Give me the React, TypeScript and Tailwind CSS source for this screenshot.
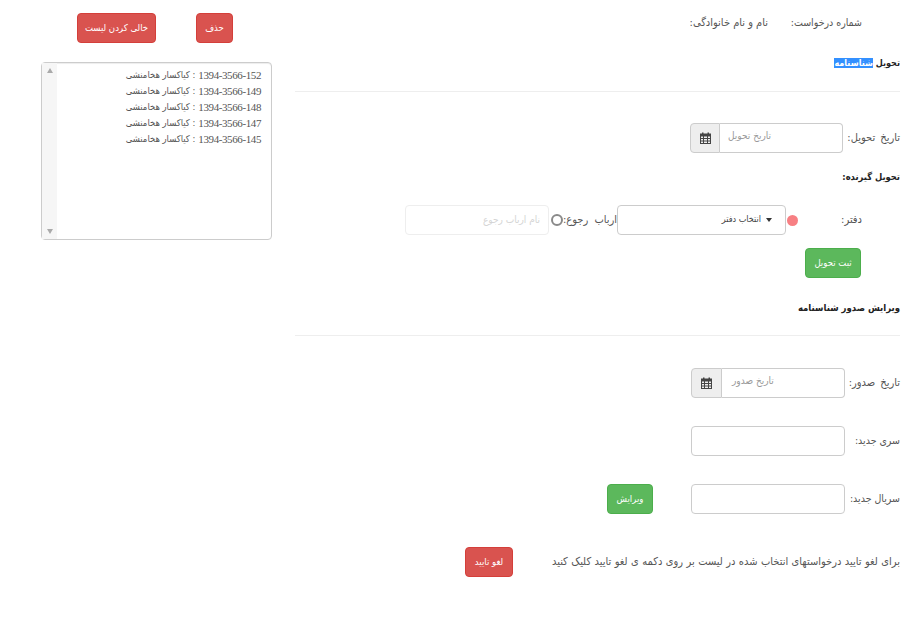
function Addon({ width }: { width: string }) {
  return (
    <span className={`flex h-full items-center justify-center rounded-l-[4px] border border-[#cccccc] bg-[#eeeeee] text-[#444] ${width}`}>
      <svg width="11" height="12" viewBox="0 0 11 12" fill="currentColor" aria-hidden="true">
        <path d="M0 1.5h2V.5h1.5v1h4v-1H9v1h2V12H0V1.5z" />
        <path fill="#eeeeee" d="M1 4.5h2v1.5H1zM4 4.5h3v1.5H4zM8 4.5h2v1.5H8zM1 7h2v1.5H1zM4 7h3v1.5H4zM8 7h2v1.5H8zM1 9.5h2V11H1zM4 9.5h3V11H4zM8 9.5h2V11H8z" />
      </svg>
    </span>
  );
}

function DateGroup({ placeholder, input, addon, pad }: { placeholder: string; input: string; addon: string; pad: string }) {
  return (
    <div className="flex h-[30px] items-stretch" dir="ltr">
      <Addon width={addon} />
      <div className={`flex items-center rounded-r-[4px] border border-l-0 border-[#cccccc] bg-white pb-[5px] text-[10px] text-[#999] ${pad} ${input}`}>
        <span dir="rtl">{placeholder}</span>
      </div>
    </div>
  );
}

function Btn({ color, className, children }: { color: "red" | "green"; className: string; children: string }) {
  const c = color === "red" ? "bg-[#d9534f] border-[#d43f3a]" : "bg-[#5cb85c] border-[#4cae4c]";
  return (
    <button className={`flex h-[30px] items-center justify-center whitespace-nowrap rounded-[4px] border text-[9.5px] text-white ${c} ${className}`}>
      {children}
    </button>
  );
}

const items = ["1394-3566-152", "1394-3566-149", "1394-3566-148", "1394-3566-147", "1394-3566-145"];

export default function App() {
  return (
    <div className="flex h-[641px] w-[921px] overflow-hidden whitespace-nowrap bg-white font-['DejaVu_Sans_Condensed','DejaVu_Sans',sans-serif] text-[11px] text-[#333]">
      <aside className="w-[295px] shrink-0 pl-[41px] pt-[13px]">
        <div className="ml-[36px] flex gap-[40px]">
          <Btn color="red" className="w-[79px]">خالی کردن لیست</Btn>
          <Btn color="red" className="w-[37px]">حذف</Btn>
        </div>
        <div className="mt-[19px] flex h-[178px] w-[231px] rounded-[4px] border border-[#cccccc] bg-white shadow-[inset_0_1px_1px_rgba(0,0,0,0.075)]">
          <div className="flex w-[15px] flex-col items-center justify-between bg-[#f6f6f6] py-[5px]">
            <span className="h-0 w-0 border-x-[3.5px] border-b-[5px] border-x-transparent border-b-[#aaa]" />
            <span className="h-0 w-0 border-x-[3.5px] border-t-[5px] border-x-transparent border-t-[#aaa]" />
          </div>
          <ul className="flex-1 pr-[10px] pt-[4px] leading-[16px]" dir="rtl">
            {items.map((n) => (
              <li key={n} className="flex gap-[3px] text-[#555]">
                <span dir="ltr" className="font-['Liberation_Serif',serif] text-[11px] tracking-[-0.4px]">{n}</span>
                <span className="text-[9.4px]">: کیاکسار هخامنشی</span>
              </li>
            ))}
          </ul>
        </div>
      </aside>

      <main className="w-[605px] pt-[15px]" dir="rtl">
        <div className="flex h-[16px] items-center pr-[38px] text-[#555]">
          <span className="w-[94px] text-[10.5px]">شماره درخواست:</span>
          <span className="text-[11px]">نام و نام خانوادگی:</span>
        </div>

        <h2 className="mt-[25px] text-[9px] font-bold leading-[14px] text-[#222]">
          تحویل <span className="bg-[#3390ff] text-white">شناسنامه</span>
        </h2>
        <hr className="mt-[21px] border-[#eeeeee]" />

        <div className="mt-[31px] flex items-center gap-[4px]">
          <span className="w-[53px] text-[#555] [word-spacing:2px]">تاریخ تحویل:</span>
          <DateGroup placeholder="تاریخ تحویل" input="w-[123px]" addon="w-[30px]" pad="pl-[8px]" />
        </div>

        <h3 className="mt-[17px] text-[9.3px] font-bold leading-[14px] text-[#222]">تحویل گیرنده:</h3>

        <div className="mt-[21px] flex h-[30px] items-center">
          <span className="w-[102px] pr-[38px] text-[#555]">دفتر:</span>
          <span className="ml-[1px] h-[11px] w-[11px] rounded-full bg-[#f77f83]" />
          <div className="flex h-[30px] w-[169px] items-center gap-[5px] rounded-[4px] border border-[#cccccc] bg-white pr-[13px] text-[9px] text-[#444]">
            <span className="h-0 w-0 border-x-[3px] border-t-[4px] border-x-transparent border-t-[#333]" />
            <span>انتخاب دفتر</span>
          </div>
          <span className="w-[54px] text-[#555] [word-spacing:3px]">ارباب رجوع:</span>
          <span className="ml-[2px] h-[12px] w-[12px] rounded-full border-2 border-[#8a8a8a] bg-white" />
          <div className="flex h-[30px] w-[144px] items-center rounded-[4px] border border-[#eeeeee] bg-white pb-[2px] pr-[8px] text-[10px] text-[#d4d4d4]">
            نام ارباب رجوع
          </div>
        </div>

        <Btn color="green" className="mr-[39px] mt-[13px] w-[56px]">ثبت تحویل</Btn>

        <h3 className="mt-[23px] text-[9.5px] font-bold leading-[14px] text-[#222]">ویرایش صدور شناسنامه</h3>
        <hr className="mt-[20px] border-[#eeeeee]" />

        <div className="mt-[32px] flex items-center gap-[3px]">
          <span className="w-[52px] text-[#555] [word-spacing:2px]">تاریخ صدور:</span>
          <DateGroup placeholder="تاریخ صدور" input="w-[123px]" addon="w-[31px]" pad="pl-[10px]" />
        </div>

        <div className="mt-[28px] flex items-center">
          <span className="w-[55px] text-[10.5px] text-[#555]">سری جدید:</span>
          <input className="h-[30px] w-[154px] rounded-[4px] border border-[#cccccc] bg-white" />
        </div>

        <div className="mt-[28px] flex items-center">
          <span className="w-[55px] text-[10.5px] text-[#555]">سریال جدید:</span>
          <input className="h-[30px] w-[154px] rounded-[4px] border border-[#cccccc] bg-white" />
          <Btn color="green" className="mr-[38px] w-[46px]">ویرایش</Btn>
        </div>

        <div className="mt-[33px] flex items-center">
          <span className="w-[348px] text-[11px] text-[#555] [word-spacing:0.3px]">
            برای لغو تایید درخواستهای انتخاب شده در لیست بر روی دکمه ی لغو تایید کلیک کنید
          </span>
          <Btn color="red" className="mr-[39px] w-[48px]">لغو تایید</Btn>
        </div>
      </main>
    </div>
  );
}
